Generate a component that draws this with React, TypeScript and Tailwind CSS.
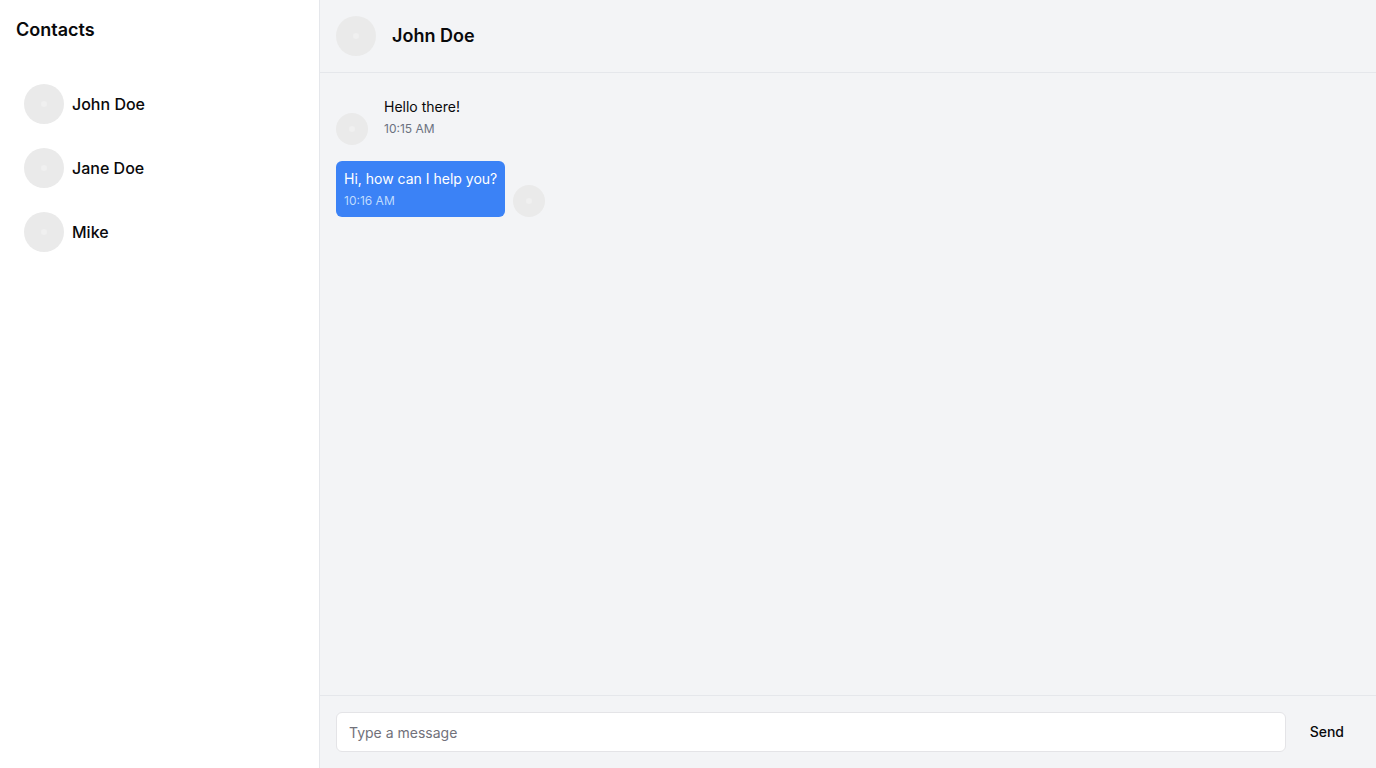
import React, { useState } from "react";

type Message = { id: number; text: string; time: string; own: boolean };

const contacts = ["John Doe", "Jane Doe", "Mike"];

const messages: Message[] = [
  { id: 1, text: "Hello there!", time: "10:15 AM", own: false },
  { id: 2, text: "Hi, how can I help you?", time: "10:16 AM", own: true },
];

function Avatar({ small = false }: { small?: boolean }) {
  return (
    <span
      aria-hidden="true"
      className={`flex shrink-0 items-center justify-center rounded-full bg-[#eaeaea] ${small ? "size-8" : "size-10"}`}
    >
      <span className="size-1.5 rounded-full bg-[#f0f0f0]" />
    </span>
  );
}

function MessageRow({ message }: { message: Message }) {
  return (
    <li className="flex items-end gap-2">
      {!message.own && <Avatar small />}
      <div className={`rounded-md p-2 text-sm ${message.own ? "bg-[#3b82f6] text-white" : ""}`}>
        <p>{message.text}</p>
        <time className={`mt-1 block text-xs ${message.own ? "text-[#bfdbfe]" : "text-[#6b7280]"}`}>
          {message.time}
        </time>
      </div>
      {message.own && <Avatar small />}
    </li>
  );
}

export default function App() {
  const [draft, setDraft] = useState("");

  return (
    <div className="flex h-screen bg-[#f3f4f6] font-['Inter',sans-serif] text-[#09090b]">
      <aside className="w-80 shrink-0 border-r border-[#e5e7eb] bg-white p-4">
        <h2 className="text-lg font-semibold">Contacts</h2>
        <ul className="mt-8 flex flex-col gap-2">
          {contacts.map((name) => (
            <li key={name}>
              <button type="button" className="flex w-full items-center gap-2 rounded-md p-2 text-left font-medium">
                <Avatar />
                {name}
              </button>
            </li>
          ))}
        </ul>
      </aside>
      <main className="flex min-w-0 flex-1 flex-col">
        <header className="flex items-center gap-4 border-b border-[#e5e7eb] p-4">
          <Avatar />
          <h1 className="text-lg font-semibold">John Doe</h1>
        </header>
        <ul className="flex flex-1 flex-col gap-4 overflow-y-auto p-4">
          {messages.map((message) => (
            <MessageRow key={message.id} message={message} />
          ))}
        </ul>
        <form
          className="flex items-center gap-2 border-t border-[#e5e7eb] p-4"
          onSubmit={(event) => {
            event.preventDefault();
            setDraft("");
          }}
        >
          <input
            type="text"
            aria-label="Message"
            placeholder="Type a message"
            value={draft}
            onChange={(event) => setDraft(event.target.value)}
            className="h-10 min-w-0 flex-1 rounded-md border border-[#e4e4e7] bg-white px-3 text-sm placeholder:text-[#71717a]"
          />
          <button type="submit" className="h-10 rounded-md px-4 text-sm font-medium">
            Send
          </button>
        </form>
      </main>
    </div>
  );
}
